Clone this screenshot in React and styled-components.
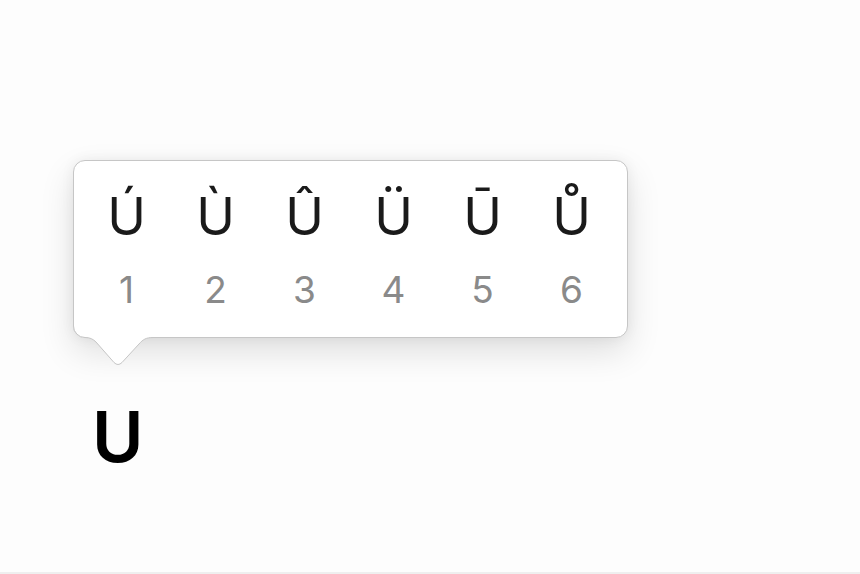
import React from "react";
import styled, { createGlobalStyle } from "styled-components";

const GlobalStyle = createGlobalStyle`
    html, body {
        margin: 0;
        padding: 0;
        background: #fdfdfd;
    }
    body {
        font-family: Inter, "Noto Sans", "Liberation Sans", sans-serif;
        -webkit-font-smoothing: antialiased;
    }
`;

const Page = styled.div`
    box-sizing: border-box;
    height: 574px;
    padding: 160px 0 0 73px;
    border-bottom: 2px solid #efefef;
    overflow: hidden;
`;

const Popup = styled.div`
    position: relative;
    box-sizing: border-box;
    width: 555px;
    height: 178px;
    padding: 28px 13px 0 8px;
    background: #ffffff;
    border: 1px solid #c6c6c6;
    border-radius: 12px;
    box-shadow: 0 14px 34px rgba(0, 0, 0, 0.12), 0 0 14px rgba(0, 0, 0, 0.06);
`;

const Options = styled.div`
    display: grid;
    grid-template-columns: repeat(6, 89px);
`;

const Option = styled.div`
    display: flex;
    flex-direction: column;
    align-items: center;
    gap: 25px;
`;

const Accented = styled.span`
    font-size: 52px;
    line-height: 56px;
    font-weight: 400;
    color: #1a1a1a;
`;

const Shortcut = styled.span`
    font-size: 37px;
    line-height: 40px;
    font-weight: 400;
    color: #8a8a8a;
`;

const Tail = styled.svg`
    position: absolute;
    left: -1px;
    top: 163px;
    overflow: visible;
`;

const Typed = styled.div`
    margin: 64px 0 0 19px;
    font-size: 70px;
    line-height: 70px;
    font-weight: 600;
    color: #000;
`;

const variants = ["Ú", "Ù", "Û", "Ü", "Ū", "Ů"];

const outline =
    "M0.5 0 L0.5 2 A11.5 11.5 0 0 0 12 13.5 C17 13.5 20 15 23 18 L41 38.5 Q45 42.5 49 38.5 L66 20 C70 15.5 73 13.5 80 13.5 L88 13.5";

export default function App() {
    return (
        <>
            <GlobalStyle />
            <Page>
                <Popup>
                    <Options>
                        {variants.map((ch, i) => (
                            <Option key={ch}>
                                <Accented>{ch}</Accented>
                                <Shortcut>{i + 1}</Shortcut>
                            </Option>
                        ))}
                    </Options>
                    <Tail width="90" height="46" viewBox="0 0 90 46">
                        <path d={outline + " L88 0 Z"} fill="#ffffff" />
                        <path d={outline} fill="none" stroke="#c6c6c6" strokeWidth="1" />
                    </Tail>
                </Popup>
                <Typed>U</Typed>
            </Page>
        </>
    );
}
